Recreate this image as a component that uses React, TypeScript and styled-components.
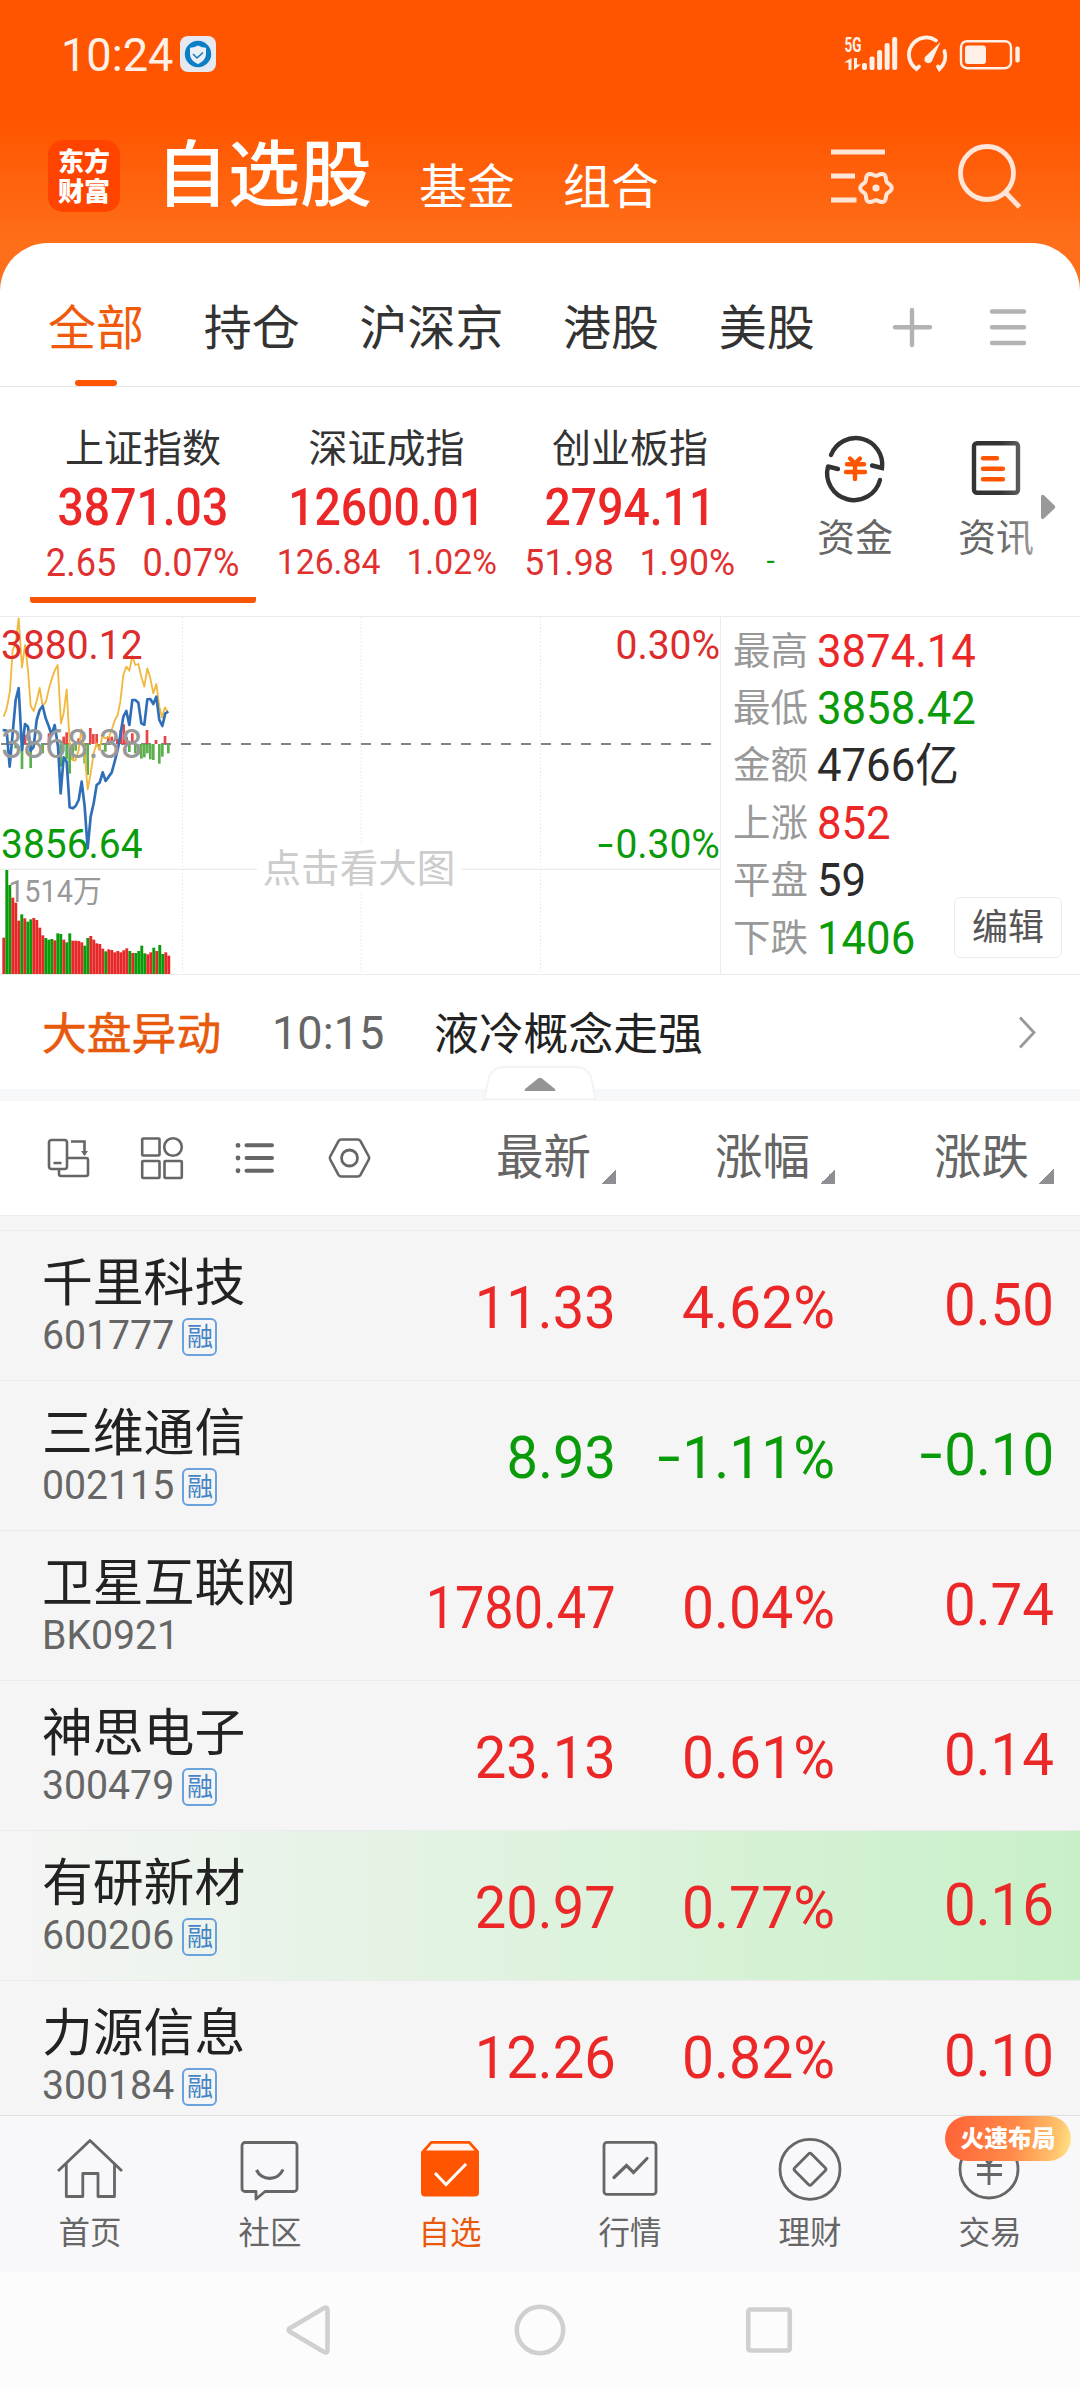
import React from "react";
import styled, { createGlobalStyle, css } from "styled-components";

const RED = "#ec2727";
const GREEN = "#0a9b0a";
const ORANGE = "#ff5500";
const INK = "#2b2b2b";
const GREY = "#666";

const GlobalStyle = createGlobalStyle`
  * { box-sizing: border-box; }
  body { margin: 0; background: #fcfcfc; }
  svg { display: block; overflow: visible; flex: none; }
`;

const Page = styled.div`
  width: 1080px;
  height: 2388px;
  overflow: hidden;
  display: flex;
  flex-direction: column;
  font-family: Roboto, "Noto Sans CJK SC", sans-serif;
  color: ${INK};
  white-space: nowrap;
  background: linear-gradient(#ff5500 0, #ff5500 122px, #ff6f1a 244px, #ff701c 300px);
`;

/* Numerals are slightly condensed compared with the base family. */
const Num = styled.span<{ $size: number; $sx?: number; $origin?: string; $color?: string; $weight?: number }>`
  display: inline-block;
  font-size: ${(p) => p.$size}px;
  line-height: 1;
  font-weight: ${(p) => p.$weight ?? 400};
  color: ${(p) => p.$color ?? "inherit"};
  transform: scaleX(${(p) => p.$sx ?? 0.95});
  transform-origin: ${(p) => p.$origin ?? "left"} center;
`;
const Dash = styled.span`
  display: inline-block;
  transform: scaleX(1.45) translateY(-0.01em);
  margin: 0 0.1em 0 0.06em;
`;
const signed = (t: string) => (t.startsWith("-") ? <><Dash>-</Dash>{t.slice(1)}</> : t);
const tone = (t: string) => (t.startsWith("-") ? GREEN : RED);

/* ---------- status bar ---------- */
const StatusBar = styled.div`
  height: 108px;
  flex: none;
  padding: 0 60px 0 61px;
  display: flex;
  align-items: center;
  color: #fff0e8;
`;
const Clock = styled.div`width: 119px; display: flex;`;
const StatusIcons = styled.div`margin-left: auto;`;

/* ---------- header ---------- */
const Header = styled.header`
  height: 135px;
  flex: none;
  display: flex;
  align-items: center;
  padding: 0 60px 0 48px;
  color: #fff;
`;
const Logo = styled.div`
  width: 72px;
  height: 72px;
  border-radius: 15px;
  background: #ff4400;
  font: 900 26px/30px "Noto Sans CJK SC", sans-serif;
  padding: 5px 9px 0 10px;
  white-space: normal;
  word-break: break-all;
`;
const Title = styled.h1`
  margin: 0 47px 0 36px;
  font-size: 72px;
  line-height: 76px;
  font-weight: 500;
`;
const HeaderLink = styled.div`
  font-size: 48px;
  line-height: 52px;
  padding-top: 24px;
  margin-right: 48px;
`;
const HeaderIcons = styled.div`margin-left: auto;`;

/* ---------- tabs ---------- */
const Sheet = styled.main`
  background: #fff;
  border-radius: 48px 48px 0 0;
  flex: none;
`;
const Tabs = styled.nav`
  height: 144px;
  border-bottom: 1px solid #e4e4e4;
  display: flex;
  align-items: center;
  padding: 24px 54px 0 48px;
  gap: 59.7px;
`;
const Tab = styled.div<{ $active?: boolean }>`
  position: relative;
  height: 119px;
  line-height: 123px;
  font-size: 48px;
  color: ${(p) => (p.$active ? "#f05a0c" : "#333")};
  ${(p) => p.$active && css`
    &::after {
      content: "";
      position: absolute;
      left: 27px;
      bottom: 0;
      width: 42px;
      height: 6px;
      border-radius: 3px;
      background: ${ORANGE};
    }
  `}
`;
const TabTools = styled.div`margin-left: auto;`;

/* ---------- index strip ---------- */
const IndexStrip = styled.section`
  position: relative;
  height: 229px;
  display: flex;
  padding-left: 30px;
`;
const IndexCard = styled.div<{ $active?: boolean }>`
  width: 226px;
  margin-right: 17.5px;
  height: 216px;
  display: flex;
  flex-direction: column;
  align-items: center;
  border-bottom: 6px solid ${(p) => (p.$active ? "#fb5607" : "transparent")};
  border-radius: 3px;
  padding-top: 39px;
`;
const IndexName = styled.div`font-size: 39px; line-height: 46px; color: #333;`;
const IndexValue = styled.div`height: 72px; display: flex; align-items: center; justify-content: center;`;
const IndexDelta = styled.div`height: 38px; display: flex; align-items: center; justify-content: center; gap: 21px;`;
const Peek = styled.div`
  width: 24px;
  height: 200px;
  padding: 169px 0 0 6px;
  color: ${GREEN};
  font-size: 30px;
  line-height: 10px;
`;
const Shortcut = styled.div`
  width: 141px;
  display: flex;
  flex-direction: column;
  align-items: center;
  padding-top: 50px;
  font-size: 38px;
  line-height: 42px;
  color: ${GREY};
  svg { margin-bottom: 18px; }
`;
const StripFade = styled.div`
  position: absolute;
  right: 24px;
  top: 40px;
  width: 56px;
  height: 150px;
  background: linear-gradient(90deg, rgba(255,255,255,0), rgba(255,255,255,.4) 38px, rgba(255,255,255,0) 39px);
  display: flex;
  justify-content: flex-end;
  padding-top: 67px;
`;

/* ---------- market overview ---------- */
const Market = styled.section`
  height: 359px;
  display: flex;
  border-top: 1px solid #ebebeb;
  border-bottom: 1px solid #ebebeb;
`;
const ChartBox = styled.div`
  position: relative;
  width: 721px;
  border-right: 1px solid #ebebeb;
`;
const ChartTag = styled.div<{ $top: number; $right?: boolean }>`
  position: absolute;
  top: ${(p) => p.$top}px;
  ${(p) => (p.$right ? "right: 0;" : "left: 1px;")}
  display: flex;
`;
const ChartHint = styled.div`
  position: absolute;
  left: 257px;
  top: 228px;
  width: 204px;
  text-align: center;
  background: #fff;
  font-size: 38.6px;
  line-height: 48px;
  color: #ccc;
`;
const Stats = styled.div`
  position: relative;
  flex: 1;
  padding: 5px 0 0 12px;
`;
const StatRow = styled.div`
  height: 57.4px;
  display: flex;
  align-items: center;
  color: #999;
  font-size: 37.5px;
  line-height: 44px;
`;
const StatLabel = styled.div`width: 84px;`;
const EditButton = styled.button`
  position: absolute;
  right: 18px;
  bottom: 16px;
  width: 108px;
  height: 61px;
  padding: 0;
  border: 1.5px solid #ececec;
  border-radius: 6px;
  background: #fff;
  color: #555;
  font: inherit;
  font-size: 36px;
  line-height: 60px;
`;

/* ---------- news ---------- */
const News = styled.section`
  position: relative;
  height: 126px;
  border-bottom: 12px solid #f6f8fa;
  display: flex;
  align-items: center;
  padding: 1px 43px 0 42px;
  font-size: 44.8px;
  line-height: 54px;
`;
const NewsTag = styled.div`
  color: #e8590c;
  -webkit-text-stroke: 0.5px #e8590c;
  width: 230px;
  padding-top: 4px;
`;
const NewsTime = styled.div`color: ${GREY}; width: 162px; display: flex;`;
const NewsText = styled.div`color: #222; flex: 1; padding-top: 4px;`;
const Handle = styled.div`
  position: absolute;
  left: 484px;
  bottom: -11px;
`;

/* ---------- list ---------- */
const columns = "396px 220px 219px 219px";
const ListHead = styled.div`
  height: 114px;
  display: grid;
  grid-template-columns: ${columns};
  align-items: center;
`;
const Tools = styled.div`
  display: flex;
  padding-left: 47px;
  gap: 52px;
  align-items: center;
`;
const ColHead = styled.div`
  display: flex;
  justify-content: flex-end;
  align-items: center;
  gap: 10px;
  font-size: 47.5px;
  line-height: 60px;
  color: ${GREY};
`;
const SortMark = styled.i`
  width: 15px;
  height: 15px;
  margin-top: 36px;
  background: linear-gradient(135deg, transparent 50%, #8e8e93 50%);
`;
const List = styled.div`
  height: 900px;
  flex: none;
  overflow: hidden;
  background: #f5f5f5;
  border-top: 1px solid #ececec;
  padding-top: 14px;
`;
const Row = styled.div<{ $hot?: boolean }>`
  height: 150.1px;
  border-top: 1px solid #ebebeb;
  display: grid;
  grid-template-columns: ${columns};
  background: ${(p) => (p.$hot ? "linear-gradient(90deg, #f5f5f5 0%, #e5f3e5 35%, #c8f0c8 100%)" : "transparent")};
`;
const NameCell = styled.div`padding: 22px 0 0 42px;`;
const StockName = styled.div`font-size: 50.8px; line-height: 61px; color: #222;`;
const CodeLine = styled.div`
  height: 44px;
  display: flex;
  align-items: center;
  gap: 5.5px;
  color: ${GREY};
`;
const MarginTag = styled.span`
  width: 35px;
  height: 38px;
  border: 2px solid #6aa3dc;
  border-radius: 6px;
  font-size: 26px;
  line-height: 34px;
  text-align: center;
  color: #4584c6;
  margin-top: 1px;
`;
const ValueCell = styled.div<{ $raised?: boolean }>`
  display: flex;
  justify-content: flex-end;
  align-items: center;
  padding: ${(p) => (p.$raised ? "0 0 1px" : "4px 0 0")};
`;

/* ---------- bottom ---------- */
const BottomNav = styled.nav`
  height: 157px;
  flex: none;
  display: grid;
  grid-template-columns: repeat(6, 180px);
  background: #f8f8fa;
  border-top: 1px solid #e0e0e0;
`;
const NavItem = styled.div<{ $active?: boolean }>`
  position: relative;
  display: flex;
  flex-direction: column;
  align-items: center;
  padding-top: 22px;
  font-size: 31.5px;
  line-height: 40px;
  color: ${(p) => (p.$active ? "#e8590c" : GREY)};
  svg { margin-bottom: 12px; }
`;
const PromoBadge = styled.div`
  position: absolute;
  left: 45px;
  top: 0;
  width: 126px;
  height: 45px;
  border-radius: 24px;
  background: linear-gradient(100deg, #ff6538 5%, #ff8a48 55%, #ffc56e 88%, #ffe98c 100%);
  color: #fff;
  font-size: 23.7px;
  line-height: 46px;
  font-weight: 900;
  text-align: center;
`;
const SystemNav = styled.div`
  flex: 1;
  background: #fcfcfc;
  display: flex;
  justify-content: center;
  align-items: center;
`;

/* ---------- data ---------- */
const indices = [
  { name: "上证指数", value: "3871.03", diff: "2.65", pct: "0.07%", size: 38 },
  { name: "深证成指", value: "12600.01", diff: "126.84", pct: "1.02%", size: 35.5 },
  { name: "创业板指", value: "2794.11", diff: "51.98", pct: "1.90%", size: 37.5 },
];
const stats = [
  { label: "最高", value: "3874.14", color: RED },
  { label: "最低", value: "3858.42", color: GREEN },
  { label: "金额", value: "4766亿", color: INK },
  { label: "上涨", value: "852", color: RED },
  { label: "平盘", value: "59", color: INK },
  { label: "下跌", value: "1406", color: GREEN },
];
const stocks = [
  { name: "千里科技", code: "601777", margin: true, last: "11.33", pct: "4.62%", diff: "0.50" },
  { name: "三维通信", code: "002115", margin: true, last: "8.93", pct: "-1.11%", diff: "-0.10" },
  { name: "卫星互联网", code: "BK0921", margin: false, last: "1780.47", pct: "0.04%", diff: "0.74" },
  { name: "神思电子", code: "300479", margin: true, last: "23.13", pct: "0.61%", diff: "0.14" },
  { name: "有研新材", code: "600206", margin: true, last: "20.97", pct: "0.77%", diff: "0.16", hot: true },
  { name: "力源信息", code: "300184", margin: true, last: "12.26", pct: "0.82%", diff: "0.10" },
];

/* Chart series use a grid of three units per pixel. */
const average = "11,350 20,325 25,300 30,272 38,150 47,130 56,55 66,203 75,135 84,210 92,318 101,333 110,303 119,264 128,318 138,305 147,265 156,235 165,210 173,195 183,370 191,340 200,268 209,430 218,480 226,482 236,450 244,388 253,450 263,568 272,520 281,460 290,430 298,450 307,410 318,415 327,410 335,390 344,362 353,345 361,305 370,225 379,200 388,212 397,168 406,195 415,192 424,230 433,260 442,205 451,235 460,280 469,252 478,320 486,352 495,322 504,338";
const price = "8,390 20,392 29,500 38,400 47,300 56,264 66,450 75,372 84,380 92,452 101,440 110,360 119,330 128,318 137,355 146,378 155,405 164,375 174,440 182,580 191,472 200,485 209,622 218,625 227,618 236,600 245,545 254,620 263,745 272,650 281,610 290,555 299,548 308,517 317,543 326,530 335,518 344,485 353,450 362,400 370,350 379,333 388,375 397,300 406,300 415,308 424,370 433,374 442,298 451,297 460,312 469,290 478,360 487,378 496,340 505,335";
const rises = [[75, 405], [147, 400], [191, 410], [200, 397], [236, 415], [271, 384], [280, 402], [290, 402], [325, 408], [335, 410], [352, 416], [362, 390], [371, 373], [380, 412], [397, 400], [441, 390], [468, 420], [495, 408]];
const falls = [[47, 445], [66, 507], [92, 504], [128, 460], [182, 500], [200, 478], [209, 521], [218, 480], [227, 452], [254, 490], [263, 525], [298, 450], [316, 455], [388, 456], [406, 460], [415, 463], [424, 476], [433, 472], [442, 460], [451, 478], [460, 480], [478, 491], [487, 470], [505, 460]];
const volumes = "r1013 g810 g855 r893 r908 r962 g943 r955 g965 g958 r954 r960 r983 r1006 g1014 g1019 g1017 r1021 g1000 g1002 r1019 g1027 g1000 r1022 r1022 r1023 r1027 g1037 g1014 r1008 r1019 r1030 r1032 r1046 g1054 r1048 r1050 r1057 r1053 r1057 r1051 r1045 g1053 r1059 g1059 g1053 g1037 g1060 r1063 r1057 g1043 r1053 g1035 g1062 r1057 r1067".split(" ");

const gearPath = Array.from({ length: 73 }, (_, i) => {
  const a = (i * Math.PI) / 36;
  const r = 14 + 1.7 * Math.cos(6 * a);
  return `${i ? "L" : "M"}${(45 + r * Math.cos(a)).toFixed(2)} ${(48 + r * Math.sin(a)).toFixed(2)}`;
}).join("") + "Z";

const ShieldIcon = () => (
  <svg width="36" height="36" viewBox="0 0 36 36">
    <rect width="36" height="36" rx="8" fill="#e6e9ef" />
    <circle cx="18" cy="18" r="13.2" fill="#0b7ec6" />
    <path d="M18 9.5c3 1.800 5.500 2.200 8 2.200v6c0 5-3.500 8.300-8 10.300-4.500-2-8-5.300-8-10.300v-6c2.500 0 5-.4 8-2.200z" fill="#eaf0f6" />
    <path d="M13 18l4 4 6-5.500" fill="none" stroke="#1878b4" strokeWidth="1.600" />
  </svg>
);

const SignalIcons = () => (
  <svg width="176" height="36" viewBox="844 36 176 36" fill="#fff0e8">
    <text x="844.5" y="52" fontSize="20" fontWeight="700" fontFamily="Roboto" textLength="17" lengthAdjust="spacingAndGlyphs">5G</text>
    <path d="M851.500 58v12h-3v-7.500h-4.500zM854 58v12l7-5.500h-4v-6.500z" />
    {[63, 56.500, 50, 43, 37].map((y, i) => <rect key={y} x={862 + i * 7.550} y={y} width="5" height={70 - y} rx="2" />)}
    <g fill="none" stroke="#fff0e8" strokeWidth="3.800" strokeLinecap="round">
      <path d="M936 40.500A17 17 0 0 0 916.500 69L919 66.500M944.500 51A17 17 0 0 1 939.500 69L938 66.500" />
    </g>
    <path d="M940.500 42l-8.500 19a4 4 0 1 1-6.500-4.500z" />
    <rect x="961" y="41.200" width="50" height="27" rx="6" fill="none" stroke="#fff0e8" strokeWidth="2.400" />
    <rect x="965" y="45.500" width="21" height="18.500" rx="3" />
    <rect x="1015.300" y="46.500" width="4.400" height="16" rx="2" />
  </svg>
);

const HeaderTools = () => (
  <svg width="189" height="72" viewBox="0 0 189 72" fill="none" stroke="#ffe6d8" strokeWidth="4.800">
    <path d="M0 12h54M0 36h24M0 60h25.500" />
    <path d={gearPath} strokeWidth="4" />
    <circle cx="45" cy="48" r="3.600" fill="#ffe6d8" stroke="none" />
    <circle cx="156" cy="33" r="26.500" />
    <path d="M174.500 52.500l14 14.500" />
  </svg>
);

const TabIcons = () => (
  <svg width="132" height="40" viewBox="894 306 132 40" stroke="#b2b2b2" strokeWidth="4.400" strokeLinecap="round">
    <path d="M895 326.300h35M912 309v35M992 310.500h32M992 326.300h32M992 342h32" />
  </svg>
);

const CapitalIcon = () => (
  <svg width="62" height="62" viewBox="825 438 62 62" fill="none" strokeWidth="4.400" strokeLinecap="round">
    <path stroke="#333" d="M832 456A26.500 26.500 0 0 1 883 469l-10-2.500M829 467.500l10 2.500M829 467.500A26.500 26.500 0 0 0 881 481" />
    <path stroke={ORANGE} d="M851 459.500l5 5 5-5M848 465.300h17M847 473h19M856 466v14" />
  </svg>
);
const InfoIcon = () => (
  <svg width="62" height="62" viewBox="966 437 62 62" fill="none" strokeWidth="4.400" strokeLinecap="round">
    <rect x="975" y="443.200" width="44" height="49.600" rx="3" stroke="#333" />
    <path stroke={ORANGE} d="M984 458.200h14M984 468.700h20M984 479.200h20" />
  </svg>
);

const TrendChart = () => (
  <svg width="720" height="357" viewBox="0 617 720 357" fill="none">
    <path d="M0 869.300h720" stroke="#ebebeb" strokeWidth="1.200" />
    <path d="M182.500 617v357M361 617v357M540.500 617v357" stroke="#e6e6e6" strokeWidth="1" strokeDasharray="1.500 2" />
    <path d="M1 744h711" stroke="#858585" strokeWidth="1.800" strokeDasharray="10 10" />
    <g transform="translate(0 600) scale(.33333)">
      {rises.map(([x, y]) => <rect key={x} x={x - 4} y={y} width="8" height={432 - y} fill="#ea4444" />)}
      {falls.map(([x, y]) => <rect key={x} x={x - 4} y={432} width="8" height={y - 432} fill="#5ab04a" />)}
      <polyline points={average} stroke="#f1b840" strokeWidth="5.500" strokeLinejoin="round" />
      <polyline points={price} stroke="#2f6fb7" strokeWidth="8" strokeLinejoin="round" />
      {volumes.map((v, i) => {
        const y = Number(v.slice(1));
        return <rect key={i} x={7 + i * 9} y={y} width="8.700" height={1122 - y} fill={v[0] === "r" ? "#e62828" : "#0a9b0a"} />;
      })}
    </g>
  </svg>
);

const toolIcon = { fill: "none", stroke: "#666", strokeWidth: 2.6 } as const;
const ToolIcons = () => (
  <>
    <svg width="42" height="42" viewBox="0 0 42 42" {...toolIcon}>
      <rect x="2" y="3" width="18" height="29" rx="2.500" />
      <path d="M6.500 26h8M12 32v5a2 2 0 0 0 2 2h25a2 2 0 0 0 2-2v-14a2 2 0 0 0-2-2h-19M24 4.500h13.500v13" />
      <path d="M34 14h7l-3.500 5z" fill="#666" stroke="none" />
    </svg>
    <svg width="42" height="42" viewBox="0 0 42 42" {...toolIcon}>
      <rect x="1.200" y="1.500" width="17.300" height="17" rx="1" /><circle cx="32" cy="10" r="8.800" />
      <rect x="1.200" y="24" width="17.300" height="17" rx="1" /><rect x="23.500" y="24" width="17.300" height="17" rx="1" />
    </svg>
    <svg width="42" height="42" viewBox="0 0 42 42" {...toolIcon} strokeWidth="4" strokeLinecap="round">
      <path d="M3 8.300v.1M3 21v.1M3 33.700v.1" strokeWidth="4.800" />
      <path d="M11.500 8.300h25.500M11.500 21h25.500M11.500 33.700h25.500" />
    </svg>
    <svg width="42" height="42" viewBox="0 0 42 42" {...toolIcon} strokeLinejoin="round">
      <path d="M12.500 2.500h16q2 0 3 1.700l8.300 15.300q.8 1.500 0 3l-8.300 15.300q-1 1.700-3 1.700h-16q-2 0-3-1.700l-8.300-15.300q-.8-1.500 0-3l8.300-15.300q1-1.700 3-1.700z" />
      <circle cx="20.500" cy="21" r="8" strokeWidth="2.800" />
    </svg>
  </>
);

const navStroke = { width: 64, height: 64, viewBox: "0 0 64 64", fill: "none", stroke: "#666", strokeWidth: 2.800 } as const;
const navItems = [
  { label: "首页", icon: <svg {...navStroke}><path d="M0 33l32-30.500L64 33M8.300 26v32.500h16.500v-23h15.200v23h16.500V26" strokeLinejoin="round" /></svg> },
  { label: "社区", icon: <svg {...navStroke}><path d="M7 4.500h49a3 3 0 0 1 3 3v43a3 3 0 0 1-3 3H27l-9 7.500v-7.500H7a3 3 0 0 1-3-3v-43a3 3 0 0 1 3-3z" strokeLinejoin="round" /><path d="M18.500 32a14.500 14.500 0 0 0 26.500-.5" strokeWidth="3.200" /></svg> },
  { label: "自选", active: true, icon: <svg {...navStroke} stroke={ORANGE}><path d="M3 13.500h58v41a4 4 0 0 1-4 4H7a4 4 0 0 1-4-4z" fill={ORANGE} stroke="none" /><path d="M5 13.800l8.300-9.400h38l8.300 9.400z" fill="#fff5ef" strokeLinejoin="round" /><path d="M17 35l11 11.500L48 26" stroke="#fff" strokeWidth="3" /></svg> },
  { label: "行情", icon: <svg {...navStroke}><rect x="6" y="4.400" width="52" height="52" rx="3" /><path d="M16 39.500L28.500 27.500l7 7L49 20.500" strokeWidth="3.200" strokeLinecap="round" /></svg> },
  { label: "理财", icon: <svg {...navStroke}><circle cx="32" cy="31.300" r="30" /><path d="M30.500 16l-13.700 13.800q-1.500 1.500 0 3l13.700 13.700q1.500 1.500 3 0l13.700-13.700q1.500-1.500 0-3L33.500 16q-1.500-1.500-3 0z" /></svg> },
  { label: "交易", badge: "火速布局", icon: <svg {...navStroke}><circle cx="31" cy="31" r="29" /><path d="M23 15l8 11 8-11M19 27.500h25M19 36.500h25M31 26v21" /></svg> },
];

export default function App() {
  return (
    <Page>
      <GlobalStyle />
      <StatusBar>
        <Clock><Num $size={47} $sx={0.96}>10:24</Num></Clock>
        <ShieldIcon />
        <StatusIcons><SignalIcons /></StatusIcons>
      </StatusBar>
      <Header>
        <Logo>东方财富</Logo>
        <Title>自选股</Title>
        <HeaderLink>基金</HeaderLink>
        <HeaderLink>组合</HeaderLink>
        <HeaderIcons><HeaderTools /></HeaderIcons>
      </Header>
      <Sheet>
        <Tabs>
          {["全部", "持仓", "沪深京", "港股", "美股"].map((t, i) => <Tab key={t} $active={i === 0}>{t}</Tab>)}
          <TabTools><TabIcons /></TabTools>
        </Tabs>
        <IndexStrip>
          {indices.map((x, i) => (
            <IndexCard key={x.name} $active={i === 0}>
              <IndexName>{x.name}</IndexName>
              <IndexValue><Num $size={52} $sx={0.89} $weight={500} $origin="center" $color={RED}>{x.value}</Num></IndexValue>
              <IndexDelta>
                <Num $size={x.size} $origin="center" $color="#e03030">{x.diff}</Num>
                <Num $size={x.size} $origin="center" $color="#e03030">{x.pct}</Num>
              </IndexDelta>
            </IndexCard>
          ))}
          <Peek>-</Peek>
          <Shortcut><CapitalIcon />资金</Shortcut>
          <Shortcut><InfoIcon />资讯</Shortcut>
          <StripFade>
            <svg width="16" height="26" viewBox="0 0 16 26"><path d="M1 3q0-3 3-1.800L14.500 11.500q1.500 1.500 0 3L4 24.500q-3 1.500-3-1.500z" fill="#999" /></svg>
          </StripFade>
        </IndexStrip>
        <Market>
          <ChartBox>
            <TrendChart />
            <ChartHint>点击看大图</ChartHint>
            <ChartTag $top={8}><Num $size={41} $color="#dd2c2c">3880.12</Num></ChartTag>
            <ChartTag $top={107}><Num $size={41} $color="#999">3868.38</Num></ChartTag>
            <ChartTag $top={207}><Num $size={41} $color={GREEN}>3856.64</Num></ChartTag>
            <ChartTag $top={259}><Num $size={31} $color="#999" $sx={0.93}>&nbsp;1514万</Num></ChartTag>
            <ChartTag $top={8} $right><Num $size={41} $origin="right" $color="#dd2c2c">0.30%</Num></ChartTag>
            <ChartTag $top={207} $right><Num $size={41} $origin="right" $color={GREEN}>{signed("-0.30%")}</Num></ChartTag>
          </ChartBox>
          <Stats>
            {stats.map((s) => (
              <StatRow key={s.label}>
                <StatLabel>{s.label}</StatLabel>
                <Num $size={46} $color={s.color}>{s.value}</Num>
              </StatRow>
            ))}
            <EditButton>编辑</EditButton>
          </Stats>
        </Market>
        <News>
          <NewsTag>大盘异动</NewsTag>
          <NewsTime><Num $size={47} $sx={0.96}>10:15</Num></NewsTime>
          <NewsText>液冷概念走强</NewsText>
          <svg width="18" height="34" viewBox="0 0 18 34"><path d="M1 1.500l14 15-14 15" fill="none" stroke="#999" strokeWidth="2.800" /></svg>
          <Handle>
            <svg width="112" height="34" viewBox="0 0 112 34">
              <path d="M.5 33L4 15Q7 1.500 20 1h72q13 .5 16 14l3.500 18z" fill="#fff" stroke="#f1f3f5" strokeWidth="2" />
              <path d="M41 23L54 12.500q2-1.500 4 0L71 23q1 2-1 2H42q-2 0-1-2z" fill="#949494" />
            </svg>
          </Handle>
        </News>
        <ListHead>
          <Tools><ToolIcons /></Tools>
          {["最新", "涨幅", "涨跌"].map((t) => <ColHead key={t}>{t}<SortMark /></ColHead>)}
        </ListHead>
      </Sheet>
      <List>
        {stocks.map((s) => (
          <Row key={s.code} $hot={s.hot}>
            <NameCell>
              <StockName>{s.name}</StockName>
              <CodeLine>
                <Num $size={40} $sx={0.98}>{s.code}</Num>
                {s.margin && <MarginTag>融</MarginTag>}
              </CodeLine>
            </NameCell>
            <ValueCell><Num $size={s.last.length > 6 ? 59 : 60} $sx={s.last.length > 6 ? 0.885 : 0.935} $origin="right" $color={tone(s.pct)}>{s.last}</Num></ValueCell>
            <ValueCell><Num $size={60} $origin="right" $color={tone(s.pct)}>{signed(s.pct)}</Num></ValueCell>
            <ValueCell $raised><Num $size={60} $sx={0.94} $origin="right" $color={tone(s.pct)}>{signed(s.diff)}</Num></ValueCell>
          </Row>
        ))}
      </List>
      <BottomNav>
        {navItems.map((n) => (
          <NavItem key={n.label} $active={n.active}>
            {n.icon}
            {n.label}
            {n.badge && <PromoBadge>{n.badge}</PromoBadge>}
          </NavItem>
        ))}
      </BottomNav>
      <SystemNav>
        <svg width="520" height="52" viewBox="280 2304 520 52" fill="none" stroke="#d0d0d0" strokeWidth="4.600" strokeLinejoin="round">
          <path d="M289.500 2328.500L324 2308q3.500-1.500 3.500 2v40q0 3.500-3.500 2L289.500 2331.500q-1.500-1.500 0-3z" />
          <circle cx="540" cy="2330" r="23.200" />
          <rect x="748.300" y="2309.500" width="41.500" height="41" rx="2" />
        </svg>
      </SystemNav>
    </Page>
  );
}
